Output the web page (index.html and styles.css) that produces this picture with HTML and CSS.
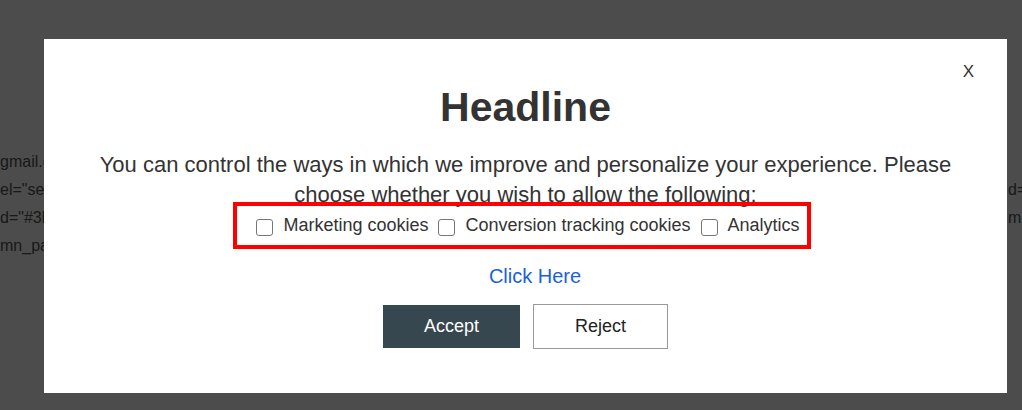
FILE: index.html
```html
<!DOCTYPE html>
<html lang="en">
<head>
    <meta charset="UTF-8">
    <meta name="viewport" content="width=device-width, initial-scale=1.0">
    <title>Cookie consent</title>
    <link rel="stylesheet" href="styles.css">
</head>
<body>
    <div class="page">
        <div class="code-line"><span>gmail.com&lt;/a&gt;&lt;/p&gt;</span><span></span></div>
        <div class="code-line"><span>el="section" data-id="1a2b"</span><span>d=</span></div>
        <div class="code-line"><span>d="#3b4a52" class="row"</span><span>m</span></div>
        <div class="code-line"><span>mn_padding="default"</span><span></span></div>
    </div>

    <div class="overlay">
        <div class="modal">
            <button class="close" type="button">X</button>
            <h1>Headline</h1>
            <p class="intro">You can control the ways in which we improve and personalize your experience. Please choose whether you wish to allow the following:</p>
            <div class="choices-wrap">
                <div class="choices">
                    <label class="choice"><input type="checkbox"><span>Marketing cookies</span></label>
                    <label class="choice"><input type="checkbox"><span>Conversion tracking cookies</span></label>
                    <label class="choice"><input type="checkbox"><span>Analytics</span></label>
                </div>
            </div>
            <a class="more-link" href="#">Click Here</a>
            <div class="actions">
                <button class="btn btn-accept" type="button">Accept</button>
                <button class="btn btn-reject" type="button">Reject</button>
            </div>
        </div>
    </div>
</body>
</html>
```

FILE: styles.css
```css
* {
    margin: 0;
    padding: 0;
    box-sizing: border-box;
}

body {
    font-family: 'Liberation Sans', Arial, sans-serif;
    background: #fff;
    color: #555;
    overflow: hidden;
    height: 100vh;
}

/* page behind the popup */
.page {
    padding-top: 148px;
    font-size: 16px;
    line-height: 28px;
}

.code-line {
    display: grid;
    grid-template-columns: 1008px 1fr;
    white-space: nowrap;
    overflow: hidden;
}

/* popup */
.overlay {
    position: fixed;
    inset: 0;
    background: rgba(0, 0, 0, 0.7);
    display: flex;
    align-items: flex-start;
    padding: 39px 0 0 44px;
}

.modal {
    position: relative;
    background: #fff;
    width: 963px;
    padding: 45px 40px 44px;
    text-align: center;
    color: #333;
}

.close {
    position: absolute;
    top: 23px;
    right: 33px;
    background: none;
    border: none;
    font-family: inherit;
    font-size: 17px;
    color: #333;
    cursor: pointer;
}

h1 {
    font-size: 41px;
    font-weight: bold;
    color: #333;
}

.intro {
    margin-top: 19px;
    font-size: 22px;
    line-height: 30px;
}

.choices-wrap {
    display: flex;
    justify-content: center;
    padding-right: 7px;
    margin-top: -8px;
}

.choices {
    display: flex;
    gap: 6px;
    border: 4px solid #f00;
    padding: 9px 7px 9px 15px;
}

.choice {
    display: flex;
    align-items: center;
    font-size: 18px;
    color: #333;
    cursor: pointer;
}

.choice input {
    appearance: none;
    -webkit-appearance: none;
    width: 17px;
    height: 17px;
    margin: 4px 10px 0 4px;
    border: 1.5px solid #767676;
    border-radius: 3px;
    background: #fff;
}

.more-link {
    display: block;
    margin-top: 16px;
    padding-left: 19px;
    font-size: 20px;
    color: #1a5fdb;
    text-decoration: none;
}

.actions {
    display: flex;
    justify-content: center;
    align-items: center;
    gap: 13px;
    margin-top: 16px;
}

.btn {
    font-family: inherit;
    font-size: 18px;
    line-height: 21px;
    padding: 11px 41px;
    cursor: pointer;
}

.btn-accept {
    background: #37474f;
    color: #fff;
    border: none;
}

.btn-reject {
    background: #fff;
    color: #222;
    border: 1px solid #999;
}
```
